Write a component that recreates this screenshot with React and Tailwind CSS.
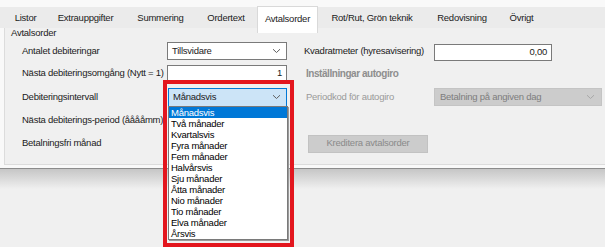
const TABS = [
  { label: "Listor", width: "w-[39px]" },
  { label: "Extrauppgifter", width: "w-[81px]" },
  { label: "Summering", width: "w-[69px]" },
  { label: "Ordertext", width: "w-[62px]" },
  { label: "Avtalsorder", width: "w-[61px]", active: true },
  { label: "Rot/Rut, Grön teknik", width: "w-[108px]" },
  { label: "Redovisning", width: "w-[72px]" },
  { label: "Övrigt", width: "w-[47px]" },
];

const INTERVALS = [
  "Månadsvis",
  "Två månader",
  "Kvartalsvis",
  "Fyra månader",
  "Fem månader",
  "Halvårsvis",
  "Sju månader",
  "Åtta månader",
  "Nio månader",
  "Tio månader",
  "Elva månader",
  "Årsvis",
];

function Chevron({ color = "#5f5f5f" }) {
  return (
    <svg width="9" height="6" viewBox="0 0 9 6" className="shrink-0">
      <path d="M1 1.2l3.5 3.3L8 1.2" fill="none" stroke={color} strokeWidth="1" />
    </svg>
  );
}

function ComboBox({ value, className = "" }) {
  return (
    <div className={`flex items-center justify-between pl-[4px] pr-[5px] ${className}`}>
      <span>{value}</span>
      <Chevron />
    </div>
  );
}

export default function App() {
  return (
    <div className="relative h-[247px] w-[605px] overflow-hidden whitespace-nowrap bg-[#f0f0f0] font-['Liberation_Sans',Arial,sans-serif] text-[9.5px] tracking-[-0.25px] text-[#1b1b1b]">
      <div className="h-[7px] bg-[#f9f9f9]" />

      {/* tab strip */}
      <div className="flex h-[24px] bg-[#ebebeb] pl-[6px]">
        {TABS.map((tab) =>
          tab.active ? (
            <div
              key={tab.label}
              className={`${tab.width} relative z-10 -mt-px flex h-[27px] items-center justify-center border-x border-t border-[#d9d9d9] bg-white pb-[2px]`}
            >
              {tab.label}
            </div>
          ) : (
            <div
              key={tab.label}
              className={`${tab.width} flex items-center justify-center pb-[1px]`}
            >
              {tab.label}
            </div>
          )
        )}
      </div>
      <div className="h-[2px] bg-[#fafafa]" />

      {/* tab page */}
      <div className="h-[140px] bg-[#f9f9f9] pb-[3px] pl-[4px]">
        <div className="h-full border-b border-l border-[#dcdcdc] bg-[#f0f0f0]">
          <div className="relative -mt-[5px] h-[10px] pl-[6px] leading-[10px]">
            Avtalsorder
          </div>

          <div className="mt-[2px] grid grid-cols-[145px_120px_19px_128px_auto] grid-rows-[22px_23px_24px_23px_23px] items-center pl-[17px]">
            {/* row 1 */}
            <div>Antalet debiteringar</div>
            <ComboBox
              value="Tillsvidare"
              className="h-[18px] border border-[#7a7a7a] bg-white"
            />
            <div />
            <div className="-ml-[2px]">Kvadratmeter (hyresavisering)</div>
            <div className="mt-[3px] flex h-[17px] w-[118px] items-center justify-end border border-[#7a7a7a] bg-white pr-[4px]">
              0,00
            </div>

            {/* row 2 */}
            <div>Nästa debiteringsomgång (Nytt = 1)</div>
            <div className="flex h-[18px] items-center justify-end border border-[#7a7a7a] bg-white pr-[4px]">
              1
            </div>
            <div />
            <div className="col-span-2 text-[10px] font-bold tracking-[-0.45px] text-[#8e8e8e]">
              Inställningar autogiro
            </div>

            {/* row 3 */}
            <div>Debiteringsintervall</div>
            <ComboBox
              value="Månadsvis"
              className="ml-px h-[19px] border border-[#0078d7] bg-[#cce4f7]"
            />
            <div />
            <div className="text-[#9a9a9a]">Periodkod för autogiro</div>
            <div className="flex h-[18px] w-[168px] items-center justify-between border border-[#c4c4c4] bg-[#cccccc] pl-[5px] pr-[6px] text-[#7d7d7d]">
              <span>Betalning på angiven dag</span>
              <Chevron color="#a8a8a8" />
            </div>

            {/* row 4 */}
            <div>Nästa debiterings-period (ååååmm)</div>
            <div />
            <div />
            <div />
            <div />

            {/* row 5 */}
            <div>Betalningsfri månad</div>
            <div />
            <div />
            <div className="ml-[2px] flex h-[18px] w-[120px] items-center justify-center border border-[#c2c2c2] bg-[#cccccc] text-[#8a8a8a]">
              Kreditera avtalsorder
            </div>
            <div />
          </div>
        </div>
      </div>

      <div className="h-px bg-[#8c8c8c]" />
      <div className="h-[20px] bg-gradient-to-b from-[#c6c6c6] to-[#f0f0f0]" />

      {/* open dropdown list */}
      <div className="absolute left-[168px] top-[106px] w-[120px] border border-[#7a7a7a] bg-white shadow-[1px_1px_0_#9a9a9a]">
        {INTERVALS.map((item, index) => (
          <div
            key={item}
            className={`flex h-[11px] items-center pl-[2px] leading-[11px] ${
              index === 0 ? "bg-[#0078d7] text-white" : "text-black"
            }`}
          >
            {item}
          </div>
        ))}
      </div>

      {/* highlight frame */}
      <div className="pointer-events-none absolute left-[163px] top-[80px] h-[167px] w-[131px] border-4 border-[#e3161e]" />
    </div>
  );
}
